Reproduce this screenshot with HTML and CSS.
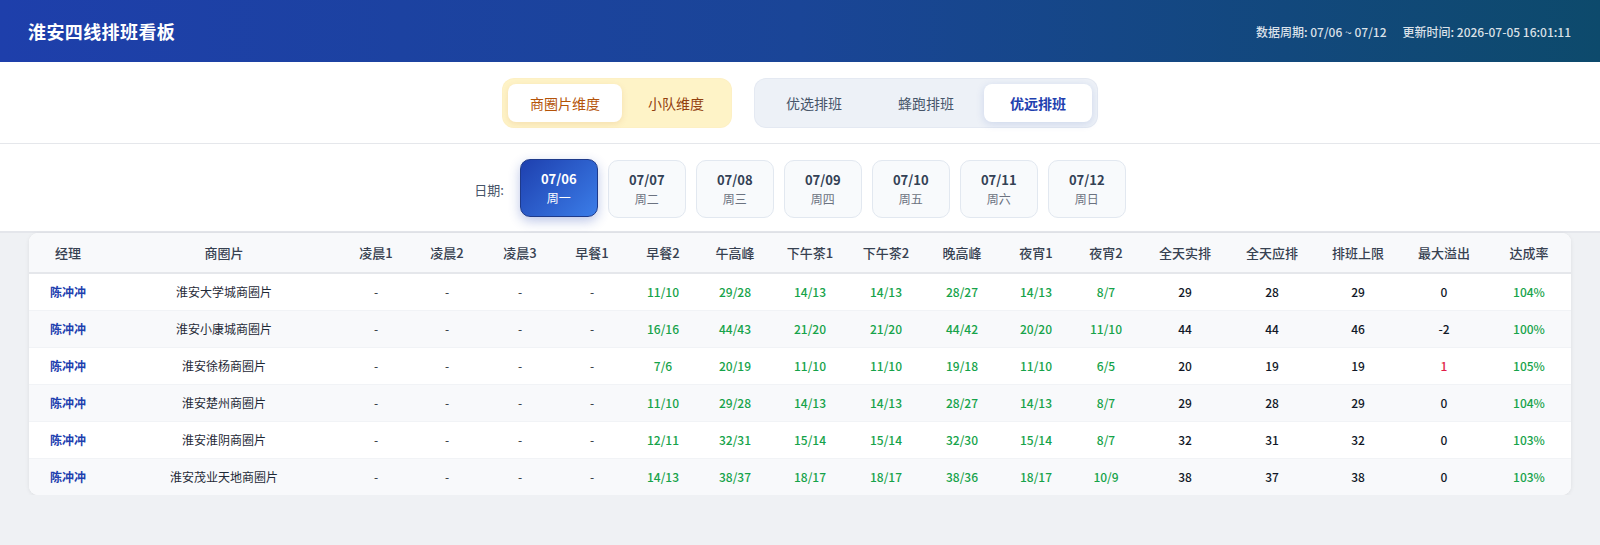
FILE: index.html
```html
<!DOCTYPE html>
<html lang="zh-CN">
<head>
<meta charset="utf-8">
<title>淮安四线排班看板</title>
<link rel="stylesheet" href="styles.css">
</head>
<body>
<header class="topbar">
  <h1 class="title">淮安四线排班看板</h1>
  <div class="meta">
    <span>数据周期: 07/06 ~ 07/12</span>
    <span>更新时间: 2026-07-05 16:01:11</span>
  </div>
</header>

<section class="tabs">
  <div class="seg seg-amber">
    <button class="seg-btn active">商圈片维度</button>
    <button class="seg-btn">小队维度</button>
  </div>
  <div class="seg seg-slate">
    <button class="seg-btn">优选排班</button>
    <button class="seg-btn">蜂跑排班</button>
    <button class="seg-btn active">优远排班</button>
  </div>
</section>

<section class="dates">
  <span class="date-label">日期:</span>
  <div class="date-card active"><b>07/06</b><span>周一</span></div>
  <div class="date-card"><b>07/07</b><span>周二</span></div>
  <div class="date-card"><b>07/08</b><span>周三</span></div>
  <div class="date-card"><b>07/09</b><span>周四</span></div>
  <div class="date-card"><b>07/10</b><span>周五</span></div>
  <div class="date-card"><b>07/11</b><span>周六</span></div>
  <div class="date-card"><b>07/12</b><span>周日</span></div>
</section>

<main class="content">
  <div class="card">
    <table class="grid">
      <colgroup>
        <col class="w78"><col class="w234">
        <col class="w70"><col class="w72"><col class="w74"><col class="w70"><col class="w72">
        <col class="w72"><col class="w78"><col class="w74"><col class="w78"><col class="w70"><col class="w70">
        <col class="w88"><col class="w86"><col class="w86"><col class="w86"><col class="w84">
      </colgroup>
      <thead>
        <tr>
          <th>经理</th><th>商圈片</th><th>凌晨1</th><th>凌晨2</th><th>凌晨3</th><th>早餐1</th><th>早餐2</th><th>午高峰</th><th>下午茶1</th><th>下午茶2</th><th>晚高峰</th><th>夜宵1</th><th>夜宵2</th><th>全天实排</th><th>全天应排</th><th>排班上限</th><th>最大溢出</th><th>达成率</th>
        </tr>
      </thead>
      <tbody>
        <tr>
          <td class="mgr">陈冲冲</td><td>淮安大学城商圈片</td><td>-</td><td>-</td><td>-</td><td>-</td>
          <td class="ok">11/10</td><td class="ok">29/28</td><td class="ok">14/13</td><td class="ok">14/13</td><td class="ok">28/27</td><td class="ok">14/13</td><td class="ok">8/7</td>
          <td class="num">29</td><td class="num">28</td><td class="num">29</td><td class="num">0</td><td class="rate">104%</td>
        </tr>
        <tr>
          <td class="mgr">陈冲冲</td><td>淮安小康城商圈片</td><td>-</td><td>-</td><td>-</td><td>-</td>
          <td class="ok">16/16</td><td class="ok">44/43</td><td class="ok">21/20</td><td class="ok">21/20</td><td class="ok">44/42</td><td class="ok">20/20</td><td class="ok">11/10</td>
          <td class="num">44</td><td class="num">44</td><td class="num">46</td><td class="num">-2</td><td class="rate">100%</td>
        </tr>
        <tr>
          <td class="mgr">陈冲冲</td><td>淮安徐杨商圈片</td><td>-</td><td>-</td><td>-</td><td>-</td>
          <td class="ok">7/6</td><td class="ok">20/19</td><td class="ok">11/10</td><td class="ok">11/10</td><td class="ok">19/18</td><td class="ok">11/10</td><td class="ok">6/5</td>
          <td class="num">20</td><td class="num">19</td><td class="num">19</td><td class="num over">1</td><td class="rate">105%</td>
        </tr>
        <tr>
          <td class="mgr">陈冲冲</td><td>淮安楚州商圈片</td><td>-</td><td>-</td><td>-</td><td>-</td>
          <td class="ok">11/10</td><td class="ok">29/28</td><td class="ok">14/13</td><td class="ok">14/13</td><td class="ok">28/27</td><td class="ok">14/13</td><td class="ok">8/7</td>
          <td class="num">29</td><td class="num">28</td><td class="num">29</td><td class="num">0</td><td class="rate">104%</td>
        </tr>
        <tr>
          <td class="mgr">陈冲冲</td><td>淮安淮阴商圈片</td><td>-</td><td>-</td><td>-</td><td>-</td>
          <td class="ok">12/11</td><td class="ok">32/31</td><td class="ok">15/14</td><td class="ok">15/14</td><td class="ok">32/30</td><td class="ok">15/14</td><td class="ok">8/7</td>
          <td class="num">32</td><td class="num">31</td><td class="num">32</td><td class="num">0</td><td class="rate">103%</td>
        </tr>
        <tr>
          <td class="mgr">陈冲冲</td><td>淮安茂业天地商圈片</td><td>-</td><td>-</td><td>-</td><td>-</td>
          <td class="ok">14/13</td><td class="ok">38/37</td><td class="ok">18/17</td><td class="ok">18/17</td><td class="ok">38/36</td><td class="ok">18/17</td><td class="ok">10/9</td>
          <td class="num">38</td><td class="num">37</td><td class="num">38</td><td class="num">0</td><td class="rate">103%</td>
        </tr>
      </tbody>
    </table>
  </div>
</main>
</body>
</html>
```

FILE: styles.css
```css
* { box-sizing: border-box; }

html, body {
  margin: 0;
  padding: 0;
}

body {
  background: #eff1f4;
  font-family: "Noto Sans CJK SC", "Noto Sans", sans-serif;
  color: #1f2937;
}

.topbar {
  height: 62px;
  padding: 0 29px 0 28px;
  display: flex;
  align-items: center;
  justify-content: space-between;
  background: linear-gradient(90deg, #1e3fab 0%, #1a4597 50%, #0d4a6c 100%);
  color: #fff;
}

.title {
  margin: 0;
  font-size: 18px;
  font-weight: 700;
  letter-spacing: 0.4px;
}

.meta {
  display: flex;
  gap: 16px;
  font-size: 12px;
  font-weight: 500;
  color: rgba(255, 255, 255, 0.85);
}

.tabs {
  background: #fff;
  border-bottom: 1px solid #e5e7eb;
  padding: 17px 0 16px;
  display: flex;
  justify-content: center;
  gap: 24px;
}

.seg {
  display: flex;
  gap: 4px;
  padding: 5px;
  border-radius: 11px;
}

.seg-amber {
  background: #fef3c7;
  box-shadow: 0 0 0 1px #fdf0c4;
}

.seg-slate {
  background: #edf1f7;
  box-shadow: 0 0 0 1px #e4e9f2;
}

.seg-btn {
  height: 38px;
  border: 0;
  background: transparent;
  border-radius: 8px;
  font-family: inherit;
  font-size: 14px;
  cursor: pointer;
}

.seg-amber .seg-btn {
  padding: 0 22px;
  color: #92400e;
}

.seg-amber .seg-btn.active {
  background: #fff;
  color: #b45309;
  box-shadow: 0 2px 6px rgba(180, 83, 9, 0.12);
}

.seg-slate .seg-btn {
  padding: 0 26px;
  width: 108px;
  color: #475569;
}

.seg-slate .seg-btn.active {
  background: #fff;
  color: #1e40af;
  font-weight: 700;
  box-shadow: 0 2px 8px rgba(30, 64, 175, 0.15);
}

.dates {
  background: #fff;
  border-bottom: 2px solid #e4e6eb;
  padding: 16px 0 13px;
  display: flex;
  justify-content: center;
  align-items: center;
  gap: 10px;
}

.date-label {
  font-size: 13px;
  color: #475569;
  margin-right: 6px;
}

.date-card {
  width: 78px;
  height: 58px;
  border: 1px solid #e2e8f0;
  background: #f8fafc;
  border-radius: 10px;
  display: flex;
  flex-direction: column;
  align-items: center;
  justify-content: center;
  gap: 3px;
}

.date-card b {
  font-size: 13px;
  font-weight: 700;
  color: #334155;
  line-height: 16px;
}

.date-card span {
  font-size: 12px;
  color: #6b7280;
  line-height: 16px;
}

.date-card.active {
  background: linear-gradient(135deg, #1e40af 0%, #3b7de8 100%);
  border-color: #1e3a8a;
  box-shadow: 0 4px 12px rgba(30, 64, 175, 0.3);
  transform: translateY(-1px);
}

.date-card.active b,
.date-card.active span {
  color: #fff;
}

.content {
  padding: 0 29px;
}

.card {
  background: #fff;
  border-radius: 9px;
  overflow: hidden;
  box-shadow: 0 1px 4px rgba(0, 0, 0, 0.08);
}

.grid {
  width: 100%;
  border-collapse: collapse;
  table-layout: fixed;
}

.w70 { width: 70px; }
.w72 { width: 72px; }
.w74 { width: 74px; }
.w78 { width: 78px; }
.w84 { width: 84px; }
.w86 { width: 86px; }
.w88 { width: 88px; }
.w234 { width: 234px; }

.grid th {
  height: 40px;
  background: #f8f9fb;
  border-bottom: 2px solid #e5e7eb;
  font-size: 13px;
  font-weight: 500;
  color: #374151;
  text-align: center;
  padding: 0;
}

.grid td {
  height: 37px;
  padding: 0;
  text-align: center;
  font-size: 12px;
  color: #1f2937;
  border-bottom: 1px solid #f1f3f6;
}

.grid tbody tr:nth-child(even) td {
  background: #f8f9fb;
}

.grid tbody tr:last-child td {
  border-bottom: 0;
}

.grid td.mgr {
  color: #1e40af;
  font-weight: 700;
}

.grid td.ok {
  color: #16a34a;
  font-weight: 500;
}

.grid td.num {
  font-weight: 500;
  color: #111827;
}

.grid td.over {
  color: #e11d48;
}

.grid td.rate {
  color: #16a34a;
  font-weight: 500;
}
```
